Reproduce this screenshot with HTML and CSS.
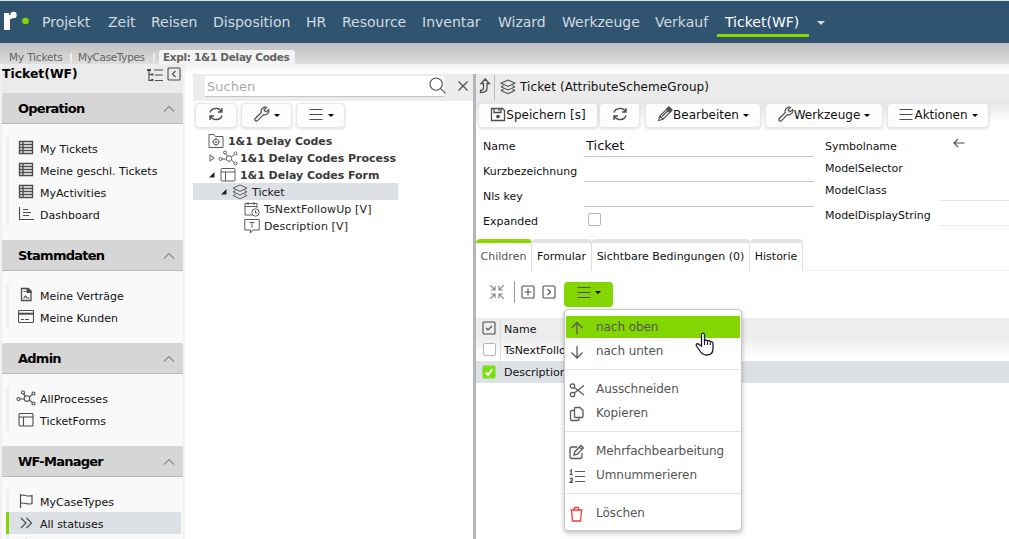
FILE: index.html
```
<!DOCTYPE html>
<html lang="de">
<head>
<meta charset="utf-8">
<title>Ticket(WF)</title>
<link rel="stylesheet" href="styles.css">
</head>
<body>
<svg class="defs" aria-hidden="true">
  <symbol id="table" viewBox="0 0 16 16"><path d="M1.5 1.5h13v12h-13zM1.5 4.5h13M1.5 7.5h13M1.5 10.5h13M5 1.5v12" stroke-width="1.4"/></symbol>
  <symbol id="chart" viewBox="0 0 16 16"><path d="M1.5 1v12.5H16M5 3.500h5M5 6.500h8M5 9.500h6"/></symbol>
  <symbol id="contract" viewBox="0 0 16 16"><path d="M3.500 1.500h6.500l3 3v9h-9.500z" stroke-width="1.300"/><path d="M9 1.500h1.500l2.500 2.500v1.500H9z" fill="currentColor"/><path d="M5.500 4.500h2M5.500 11.500l2-2.500 1.500 2h2.500"/></symbol>
  <symbol id="card" viewBox="0 0 16 16"><rect x=".5" y="1.500" width="15" height="12" rx="1"/><path d="M.5 4.700h15" stroke-width="2"/><path d="M3 10.500h3M7 10.500h4" stroke-width="1.200"/></symbol>
  <symbol id="process" viewBox="0 0 20 16"><circle cx="11" cy="8.500" r="2.800"/><circle cx="2.500" cy="9" r="1.500"/><circle cx="7" cy="2.500" r="1.500"/><circle cx="17.500" cy="3.500" r="1.500"/><circle cx="17.500" cy="13.500" r="1.500"/><path d="M4 9h4M7.500 4l2 2M13.500 7l2.500-2.300M13.500 10l2.500 2.300"/></symbol>
  <symbol id="form" viewBox="0 0 16 16"><rect x="1" y="1.500" width="14" height="12.500" rx="1"/><path d="M1 5h14M5.500 5v9"/></symbol>
  <symbol id="flag" viewBox="0 0 16 16"><path d="M2.500 1v14M2.500 2.500c4-2 6 2 11.500 0v8c-5 2-7-2-11.500 0" stroke-width="1.200"/></symbol>
  <symbol id="dbl" viewBox="0 0 16 16"><path d="M3 3l5 5-5 5M8.500 3l5 5-5 5" stroke-width="1.200"/></symbol>
  <symbol id="up" viewBox="0 0 14 8"><path d="M2 6.500L7 1.500l5 5"/></symbol>
  <symbol id="refresh" viewBox="0 0 16 16"><path d="M2 6.500C3.500 1.500 11 1 13.500 5.500M14 9.500C12.500 14.500 5 15 2.500 10.500M14 2v4h-4M2 14v-4h4" stroke-width="1.400"/></symbol>
  <symbol id="wrench" viewBox="0 0 16 16"><path d="M12.500 1.300a4.200 4.200 0 0 0-5.200 5.200L1.300 12.500a1.500 1.500 0 0 0 2.200 2.200l6-6a4.200 4.200 0 0 0 5.200-5.200l-2.700 2.500-2-2z" stroke-width="1.200"/></symbol>
  <symbol id="burger" viewBox="0 0 16 16"><path d="M1.500 3.500h13M1.500 8.500h13M1.500 13.500h13"/></symbol>
  <symbol id="folder" viewBox="0 0 16 16"><path d="M1 14.500V1.500h5l1.500 2H15v11z"/><circle cx="8" cy="9" r="2.800"/><circle cx="8" cy="9" r=".6"/><path d="M8 5v1M8 12v1M4.300 9h1M10.700 9h1"/></symbol>
  <symbol id="layers" viewBox="0 0 16 16"><path d="M8 1l7 3.200-7 3.200-7-3.200zM1 7.800L8 11l7-3.200M1 11.500l7 3.200 7-3.200M1 7.800l2.500-1.200M15 7.800l-2.500-1.200M1 11.500l2.500-1.200M15 11.500l-2.500-1.200"/></symbol>
  <symbol id="calendar" viewBox="0 0 16 16"><path d="M8 14H1V2.500h12V7M1 5.500h12M4 1v3M10 1v3"/><circle cx="11.500" cy="11.500" r="3.700"/><path d="M11.500 9.500v2.500h1.500"/></symbol>
  <symbol id="bubble" viewBox="0 0 16 16"><path d="M.8 1.500h14.400v10.500H9L6.500 15v-3H.8zM5.500 4.500h5M8 4.500V9.500"/></symbol>
  <symbol id="save" viewBox="0 0 16 16"><path d="M1.500 2.500h11l2 2v10h-13zM4 2.500v4h7v-4M9 3v2" stroke-width="1.300"/><circle cx="8" cy="10.500" r="1.300" fill="currentColor"/></symbol>
  <symbol id="pencil" viewBox="0 0 16 16"><path d="M1.500 14.500l1.300-4.500L11 1.800l3.200 3.200L6 13.200zM2.800 10L6 13.200M5 10.500l6-6"/><path d="M9.500 3.300L12 .8l3.200 3.200-2.500 2.500z" fill="currentColor"/></symbol>
  <symbol id="turn" viewBox="0 0 12 16"><path d="M1.500 14.500v-2.200c2.300 0 3-.5 3-2.300V5.500H2l4.200-4.500 4.200 4.500H8v5c0 3-2 4-6.500 4z" stroke-width="1.300"/></symbol>
  <symbol id="search" viewBox="0 0 16 16"><circle cx="6.700" cy="6.700" r="5.800"/><path d="M11 11l4.500 4.500"/></symbol>
  <symbol id="close" viewBox="0 0 12 12"><path d="M1.500 1.500l9 9M10.500 1.500l-9 9" stroke-width="1.200"/></symbol>
  <symbol id="tree" viewBox="0 0 16 14"><path d="M2 1v11.500h3M2 6.500h3M7 2h9M8 7h8M8 12.500h8" stroke-width="1.200"/><path d="M0 2h4M4 6.500h2.500M4 12h2.500" stroke-width="2"/></symbol>
  <symbol id="boxleft" viewBox="0 0 14 14"><rect x="1" y="1" width="12" height="12" rx="1"/><path d="M8.500 4L5.500 7l3 3"/></symbol>
  <symbol id="boxright" viewBox="0 0 14 14"><rect x="1" y="1" width="12" height="12" rx="1"/><path d="M5.500 4l3 3-3 3"/></symbol>
  <symbol id="boxplus" viewBox="0 0 14 14"><rect x="1" y="1" width="12" height="12" rx="1"/><path d="M3.500 7h7M7 3.500v7"/></symbol>
  <symbol id="boxcheck" viewBox="0 0 14 14"><rect x="1" y="1" width="12" height="12" rx="1"/><path d="M4 7l2 2 4-4"/></symbol>
  <symbol id="shrink" viewBox="0 0 14 14"><path d="M0 0l5 5M5 1v4H1M14 0L9 5M9 1v4h4M0 14l5-5M5 13V9H1M14 14L9 9M9 13V9h4" stroke-width="1.200"/></symbol>
  <symbol id="left" viewBox="0 0 12 10"><path d="M11.500 5H1M5 1L1 5l4 4"/></symbol>
  <symbol id="arrup" viewBox="0 0 16 16"><path d="M8 14.500V2.500M2.500 8L8 2.500 13.500 8" stroke-width="1.300"/></symbol>
  <symbol id="arrdown" viewBox="0 0 16 16"><path d="M8 2v12M2.500 8.500L8 14l5.500-5.500" stroke-width="1.300"/></symbol>
  <symbol id="scissors" viewBox="0 0 16 16"><circle cx="3.500" cy="4" r="2.200"/><circle cx="3.500" cy="12.500" r="2.200"/><path d="M5.200 5.500L15 13M5.200 11L15 3.500"/></symbol>
  <symbol id="copy" viewBox="0 0 16 16"><path d="M6.500 1.500H11l3 3v6a1 1 0 0 1-1 1H6.500a1 1 0 0 1-1-1v-8a1 1 0 0 1 1-1zM5.500 4.500h-3a1 1 0 0 0-1 1v8a1 1 0 0 0 1 1H9a1 1 0 0 0 1-1v-2"/></symbol>
  <symbol id="edit" viewBox="0 0 16 16"><path d="M8 3H3a2 2 0 0 0-2 2v7.500a2 2 0 0 0 2 2h8a2 2 0 0 0 2-2V9M5 11l.8-3.300L12 1.500l2.500 2.500-6.200 6.200zM10.500 3L13 5.500"/></symbol>
  <symbol id="numlist" viewBox="0 0 16 16"><path d="M6 3.500h10M6 8.500h10M6 13.500h10" stroke-width="1"/><path d="M1 3l1.200-1v4.500M.7 6.500h3M.8 10.500h2.500v1.800L1 14.300h3"/></symbol>
  <symbol id="trash" viewBox="0 0 16 16"><path d="M1.500 4h12M2.500 4l1 11h8l1-11M5 4l.5-2.500h4L10 4"/></symbol>
</svg>

<header class="top">
  <svg class="logo" viewBox="0 0 28 20"><path d="M0 3h5v2h3v4H6v11H0z" fill="#fff"/><circle cx="9.500" cy="5" r="3.200" fill="#fff"/><circle cx="21.500" cy="11" r="3.300" fill="#84d600"/></svg>
  <nav class="nav">
    <a>Projekt</a><a>Zeit</a><a>Reisen</a><a>Disposition</a><a>HR</a><a>Resource</a><a>Inventar</a><a>Wizard</a><a>Werkzeuge</a><a>Verkauf</a><a class="on">Ticket(WF)</a><i class="caret"></i>
  </nav>
</header>
<div class="crumbs"><span class="c1">My Tickets</span><span class="c2">MyCaseTypes</span><b>Expl: 1&amp;1 Delay Codes</b></div>

<main class="main">
  <aside class="side">
    <div class="side-title"><b>Ticket(WF)</b><svg class="i-tree"><use href="#tree"/></svg><svg class="i-box"><use href="#boxleft"/></svg></div>
    <section><h2>Operation<svg><use href="#up"/></svg></h2>
      <ul><li><svg><use href="#table"/></svg>My Tickets</li><li><svg><use href="#table"/></svg>Meine geschl. Tickets</li><li><svg><use href="#table"/></svg>MyActivities</li><li><svg><use href="#chart"/></svg>Dashboard</li></ul></section>
    <section><h2>Stammdaten<svg><use href="#up"/></svg></h2>
      <ul><li><svg><use href="#contract"/></svg>Meine Verträge</li><li><svg><use href="#card"/></svg>Meine Kunden</li></ul></section>
    <section><h2>Admin<svg><use href="#up"/></svg></h2>
      <ul><li><svg class="wide"><use href="#process"/></svg>AllProcesses</li><li><svg><use href="#form"/></svg>TicketForms</li></ul></section>
    <section><h2>WF-Manager<svg><use href="#up"/></svg></h2>
      <ul><li><svg><use href="#flag"/></svg>MyCaseTypes</li><li class="sel"><svg><use href="#dbl"/></svg>All statuses</li><li><svg><use href="#arrup"/></svg></li></ul></section>
  </aside>

  <section class="mid">
    <div class="searchbar"><div class="search"><span>Suchen</span><svg><use href="#search"/></svg></div><svg class="x"><use href="#close"/></svg></div>
    <div class="tools"><button class="w42"><svg><use href="#refresh"/></svg></button><button class="w51"><svg><use href="#wrench"/></svg><i class="caret"></i></button><button class="w49"><svg><use href="#burger"/></svg><i class="caret"></i></button></div>
    <ul class="tree">
      <li class="l0"><svg><use href="#folder"/></svg><b>1&amp;1 Delay Codes</b></li>
      <li class="l1"><svg class="tw" viewBox="0 0 8 10"><path d="M2 2l4 3-4 3z" stroke="#777"/></svg><svg class="wide"><use href="#process"/></svg><b>1&amp;1 Delay Codes Process</b></li>
      <li class="l1"><svg class="tw" viewBox="0 0 8 10"><path d="M6.500 2v5.500H1z" fill="#222"/></svg><svg class="f"><use href="#form"/></svg><b>1&amp;1 Delay Codes Form</b></li>
      <li class="l2 sel"><svg class="tw" viewBox="0 0 8 10"><path d="M6.500 2v5.500H1z" fill="#222"/></svg><svg class="f"><use href="#layers"/></svg>Ticket</li>
      <li class="l3"><svg><use href="#calendar"/></svg>TsNextFollowUp [V]</li>
      <li class="l3"><svg><use href="#bubble"/></svg>Description [V]</li>
    </ul>
  </section>

  <section class="right">
    <div class="title"><svg class="turn"><use href="#turn"/></svg><i class="sep"></i><svg><use href="#layers"/></svg><span>Ticket (AttributeSchemeGroup)</span></div>
    <div class="actions"><button class="b1"><svg><use href="#save"/></svg>Speichern [s]</button><button class="b2"><svg><use href="#refresh"/></svg></button><button class="b3"><svg><use href="#pencil"/></svg>Bearbeiten<i class="caret"></i></button><button class="b4"><svg><use href="#wrench"/></svg>Werkzeuge<i class="caret"></i></button><button class="b5"><svg><use href="#burger"/></svg>Aktionen<i class="caret"></i></button></div>
    <div class="form">
      <div class="fl"><label>Name</label><div class="in">Ticket</div><label>Kurzbezeichnung</label><div class="in"></div><label>Nls key</label><div class="in"></div><label>Expanded</label><div><i class="cb"></i></div></div>
      <div class="fr"><label>Symbolname</label><div><svg class="larr"><use href="#left"/></svg></div><label>ModelSelector</label><div></div><label>ModelClass</label><div class="in"></div><label>ModelDisplayString</label><div class="in"></div></div>
    </div>
    <div class="tabs"><span class="t1 on">Children</span><span class="t2">Formular</span><span class="t3">Sichtbare Bedingungen (0)</span><span class="t4">Historie</span></div>
    <div class="tbar"><svg class="shrink"><use href="#shrink"/></svg><i class="sep"></i><svg><use href="#boxplus"/></svg><svg><use href="#boxright"/></svg>
      <div class="drop"><button class="green"><svg><use href="#burger"/></svg><i class="caret"></i></button>
        <div class="menu">
          <div class="mi hot"><svg><use href="#arrup"/></svg>nach oben</div><div class="mi"><svg><use href="#arrdown"/></svg>nach unten</div><hr>
          <div class="mi"><svg><use href="#scissors"/></svg>Ausschneiden</div><div class="mi"><svg><use href="#copy"/></svg>Kopieren</div><hr>
          <div class="mi"><svg><use href="#edit"/></svg>Mehrfachbearbeitung</div><div class="mi"><svg><use href="#numlist"/></svg>Umnummerieren</div><hr>
          <div class="mi del"><svg><use href="#trash"/></svg>Löschen</div>
          <svg class="cursor" viewBox="0 0 20 25"><path d="M6.500 14V3c0-2.500 3-2.500 3 0v6c.5-1.500 3-1.300 3 .5.500-1.300 2.800-1 2.800.8.500-1 2.700-.8 2.700 1.200v5c0 4-2.500 6.500-6.500 6.500-3.500 0-5-1.500-6.500-4L1.500 14c-1-2 1.200-3 2.500-1.500z" fill="#fff" stroke="#1d1d2b" stroke-width="1.300"/><path d="M9.500 9v4M12.500 9.500V13M15.300 10.500V13" stroke="#1d1d2b"/></svg>
        </div></div></div>
    <div class="grid"><div class="row head"><span><svg><use href="#boxcheck"/></svg></span><span>Name</span></div><div class="row r1"><span><i class="cb"></i></span><span>TsNextFollowUp</span></div><div class="row sel"><span><svg class="ck" viewBox="0 0 14 14"><rect x=".5" y=".5" width="13" height="13" rx="2" fill="#76e010"/><path d="M3.500 7.500L6 10l4.500-6" stroke="#fff" stroke-width="2"/></svg></span><span>Description</span></div></div>
  </section>
</main>
</body>
</html>
```
FILE: styles.css
```
* { box-sizing: border-box; }
body { margin: 0; width: 1009px; height: 539px; overflow: hidden; display: flex; flex-direction: column; background: #fff; font: 11px/17px Verdana, "DejaVu Sans", sans-serif; color: #111; white-space: nowrap; }
svg { width: 16px; height: 16px; flex: none; fill: none; stroke: #4d4d4d; stroke-width: 1.100; color: #4d4d4d; display: block; }
svg.defs { position: absolute; width: 0; height: 0; }
ul { list-style: none; margin: 0; padding: 0; }
.caret { display: block; flex: none; width: 0; height: 0; border: 3px solid transparent; border-top-color: #000; border-bottom: 0; }

.top { flex: none; height: 43px; border-top: 1px solid #dfe3dc; background: #30546f; display: flex; padding-left: 4px; }
.logo { width: 28px; height: 20px; margin-top: 9px; stroke: none; }
.nav { margin-left: 2px; display: grid; grid-template-columns: 66px 43px 62px 93px 36px 80px 76px 64px 93px 70px 92px 20px; grid-template-rows: 36px; height: 36px; font-size: 14px; line-height: 42px; color: #d2dae0; }
.nav a { padding-left: 8px; height: 36px; }
.nav .on { color: #fff; border-bottom: 3px solid #8ad800; }
.nav .caret { margin: 20px 0 0 8px; border-width: 4px 4px 0; border-top-color: #d2dae0; }

.crumbs { flex: none; height: 21px; display: flex; padding: 7px 0 0 9px; background: linear-gradient(#bebebe, #dedede); font-size: 10.500px; line-height: 15px; color: #636363; }
.c1, .c2 { border-right: 2px solid #eee; height: 10px; margin-top: 3px; line-height: 9px; letter-spacing: -.2px; }
.c1 { width: 63px; margin-right: 6px; letter-spacing: -.15px; }
.c2 { width: 77px; margin-right: 4px; letter-spacing: -.35px; }
.crumbs b { width: 136px; padding-left: 4px; border-radius: 3px 3px 0 0; background: #f4f4f4; letter-spacing: -.3px; }

.main { flex: 1; min-height: 0; display: grid; grid-template-columns: 185px 288px 536px; background: linear-gradient(#f2f2f2, #fff 10px); }
.side { background: #f9f9f9; border: solid #f1f1f1; border-width: 0 2px; overflow: hidden; height: 475px; }
.side-title { height: 29px; background: #ebebeb; display: flex; font-size: 12.400px; line-height: 19px; color: #000; }
.side-title b { width: 145px; }
.i-tree { width: 16px; height: 14px; margin: 4px 4px 0 0; }
.i-box { width: 14px; height: 14px; margin: 3px 0 0 0; }
.side h2 { margin: 0; height: 31px; padding: 0 7px 0 16px; background: #d6d6d6; border-bottom: 1px solid #b9b9b9; border-radius: 2px 2px 0 0; display: flex; align-items: center; justify-content: space-between; font-size: 13px; letter-spacing: -.75px; color: #000; }
.side h2 svg { width: 14px; height: 8px; stroke: #888; margin-top: 2px; }
.side ul { margin: 13px 0 15px 4px; }
.side li { height: 22px; width: 175px; border-left: 3px solid #f0f0f0; padding: 2px 0 0 9px; display: flex; align-items: center; }
.side li svg { margin: -3px 6px 0 0; width: 16px; }
.side li svg.wide { width: 20px; margin: -3px 4px 0 -2px; }
.side li.sel { background: #dde0e5; border-color: #84d600; }

.mid { margin: 10px 0 0 8px; height: 465px; }
.searchbar { height: 27px; background: #ececec; padding: 2px 4px 4px 12px; display: flex; }
.search { width: 240px; height: 21px; background: #fff; border-bottom: 1px solid #c4c4c4; padding-left: 2px; display: flex; justify-content: space-between; font-size: 13px; line-height: 21px; color: #aaa; }
.search svg { margin: 1px -2px 0 0; width: 17px; height: 17px; stroke-width: 1; }
.x { width: 12px; height: 12px; margin: 4px 0 0 13px; }
button { font: inherit; color: #111; border: 1px solid #e6e6e6; border-radius: 4px; background: #fdfdfd; box-shadow: 0 1px 3px #0002; padding: 0; display: flex; align-items: center; justify-content: center; }
.tools { display: flex; gap: 4px; padding: 2px 0 0 2px; height: 30px; }
.tools button { height: 25px; }
.tools button svg { margin-top: -3px; }
.tools .caret { margin-left: 4px; }
.w42 { width: 42px; } .w51 { width: 51px; } .w49 { width: 49px; }
.tree { padding-top: 1px; }
.tree li { height: 17px; width: 205px; padding-top: 1px; display: flex; align-items: center; color: #222; }
.tree b { color: #3b3b3b; margin-left: 4px; letter-spacing: -.03px; }
.tree .l0 { padding-left: 15px; } .tree .l1 { padding-left: 15px; } .tree .l2 { padding-left: 27px; } .tree .l3 { padding-left: 51px; letter-spacing: .12px; }
.tree .tw { width: 8px; height: 10px; margin-right: 4px; stroke: none; }
.tree .wide { width: 20px; margin-left: -2px; }
.tree .wide + b { margin-left: 2px; }
.tree li > svg:not(.tw) { stroke: #5c5c5c; stroke-width: 1; }
.tree .f:has(+ b) { margin-right: 0; }
.tree .l2 .f, .tree .l3 svg { margin-right: 4px; }
.tree .sel { background: #dde0e5; }

.right { margin-top: 10px; border-left: 3px solid #b4b4bb; height: 465px; }
.title { height: 27px; background: #ebebeb; display: flex; align-items: center; font-size: 12px; padding-left: 4px; }
.title svg { margin-top: -2px; }
.title .turn { width: 12px; margin-left: -1px; margin-top: -3px; }
.title .sep { width: 1px; height: 25px; background: #bbb; margin: 0 5px 0 3px; }
.title span { margin-left: 4px; letter-spacing: .09px; }
.actions { height: 34px; padding: 2px 0 0 2px; display: flex; font-size: 12px; background: linear-gradient(#e6e6e6, #fff 22px); }
.actions button { height: 25px; }
.actions .caret { margin-left: 4px; margin-top: -1px; }
.actions svg { margin-top: -3px; }
.b1 { width: 120px; margin-right: 1px; } .b2 { width: 41px; margin-right: 5px; } .b3 { width: 116px; margin-right: 4px; } .b4 { width: 118px; margin-right: 4px; } .b5 { width: 102px; }
.form { display: grid; grid-template-columns: 338px 1fr; height: 104px; padding-left: 7px; }
.fl, .fr { display: grid; }
.fl { grid-template-columns: 101px 230px; grid-template-rows: 22px 25px 25px 25px; align-content: start; }
.fl label { line-height: 22px; padding-top: 1px; }
.fl label ~ label { padding-top: 4px; }
.fl .in { border-bottom: 1px solid #c6c6c6; padding-left: 2px; font-size: 13px; line-height: 22px; }
.fr { padding-left: 4px; grid-template-columns: 114px 1fr; grid-template-rows: 22px 22px 22px 25px; align-content: start; }
.fr label { line-height: 23px; letter-spacing: -.04px; }
.fr .in { border-bottom: 1px solid #e9e9e9; }
.fr label:nth-of-type(4) { line-height: 29px; }
.larr { width: 12px; height: 10px; margin: 3px 0 0 14px; }
.cb { display: block; width: 13px; height: 13px; border: 1px solid #b5b5b5; border-radius: 2px; background: #fff; }
.fl .cb { margin: 6px 0 0 4px; }
.tabs { height: 32px; display: flex; border-bottom: 1px solid #eee; }
.tabs span { height: 32px; border-top: 4px solid #e2e2e2; border-right: 1px solid #ddd; border-radius: 4px 4px 0 0; text-align: center; line-height: 28px; background: #fff; }
.tabs .on { border-top-color: #8ad800; color: #555; }
.t1 { width: 56px; } .t2 { width: 60px; } .t3 { width: 158px; } .t4 { width: 53px; }
.tbar { height: 47px; display: flex; padding: 0 0 0 14px; align-items: flex-start; }
.tbar > svg { width: 14px; height: 14px; margin: 14px 7px 0 0; }
.tbar .shrink { margin-right: 10px; stroke: #888; }
.tbar .sep { width: 1px; height: 22px; margin: 10px 6px 0 0; background: #999; }
.drop { position: relative; margin: 11px 0 0 1px; }
.green { width: 49px; height: 25px; border: 0; background: #84d600; box-shadow: none; }
.green svg { margin-top: -5px; }
.green .caret { margin: -5px 0 0 3px; }
.menu { position: absolute; z-index: 2; top: 27px; left: 0; width: 178px; height: 222px; background: #fff; border: 1px solid #c8c8c8; border-radius: 4px; box-shadow: 0 2px 5px #0004; padding: 6px 1px; font-size: 12px; letter-spacing: -.06px; color: #555; }
.mi { height: 22px; margin-bottom: 2px; padding-left: 3px; display: flex; align-items: center; }
.mi svg { margin: 1px 11px 0 0; stroke: #5a5a5a; stroke-width: 1.300; }
.mi.hot { background: #84d600; }
.menu hr { margin: 7px -1px 8px; border: 0; height: 1px; background: #e2e2e2; }
.mi.del svg { stroke: #ef3b3b; }
.menu .cursor { position: absolute; left: 130px; top: 22px; width: 20px; height: 25px; }
.row { display: grid; grid-template-columns: 25px 1fr; height: 22px; }
.row span { display: flex; align-items: center; padding: 0 0 0 3px; }
.row span:first-child { border-right: 1px solid #ddd; padding: 0 0 0 6px; }
.row .cb { margin: -2px 0 0 1px; }
.row svg { width: 14px; height: 14px; margin-top: -1px; }
.row svg.ck { stroke: none; }
.head { background: #ededed; height: 21px; }
.row.head span:last-child { padding-top: 2px; }
.r1 { background: linear-gradient(#eee, #fff 18px); }
.row.sel { background: #dde0e5; }
```
